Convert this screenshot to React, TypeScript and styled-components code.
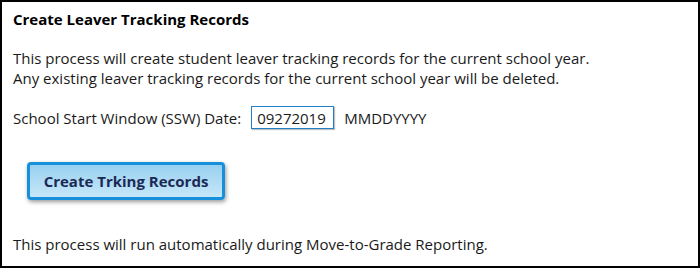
import styled, {createGlobalStyle} from "styled-components";

const GlobalStyle = createGlobalStyle`
  html, body {
    margin: 0;
    padding: 0;
    background: #ffffff;
  }
`;

const Panel = styled.div`
  box-sizing: border-box;
  width: 700px;
  height: 268px;
  border: 2px solid #000;
  padding: 7px 11px;
  font-family: "Open Sans", "Liberation Sans", sans-serif;
  font-size: 15px;
  color: #1a1a1a;
`;

const Title = styled.h1`
  margin: 0;
  font-size: 15px;
  font-weight: 700;
  line-height: 20px;
  color: #000;
`;

const Paragraph = styled.p<{ $top: number }>`
  margin: ${(p) => p.$top}px 0 0;
  line-height: 20px;
`;

const DateRow = styled.div`
  display: flex;
  align-items: center;
  gap: 10px;
  margin-top: 18px;
`;

const DateInput = styled.input`
  box-sizing: border-box;
  width: 83px;
  height: 23px;
  padding: 0 5px;
  border: 1px solid #1e80c8;
  box-shadow: 1px 1px 1px rgba(0, 0, 0, 0.25);
  font-family: inherit;
  font-size: 15px;
  color: #1a1a1a;
  outline: none;
`;

const ButtonWrap = styled.div`
  padding: 33px 0 0 14px;
`;

const ActionButton = styled.button`
  box-sizing: border-box;
  width: 198px;
  height: 38px;
  border: 3px solid #1690da;
  border-radius: 4px;
  background: linear-gradient(to bottom, #98d0f0, #c6e7f8);
  box-shadow: 1px 2px 4px rgba(0, 0, 0, 0.4);
  font-family: "Open Sans", "Liberation Sans", sans-serif;
  font-size: 15px;
  font-weight: 700;
  color: #1b2a55;
  cursor: pointer;
`;

export default function App() {
  return (
    <>
      <GlobalStyle/>
      <Panel>
        <Title>Create Leaver Tracking Records</Title>
        <Paragraph $top={19}>
          This process will create student leaver tracking records for the current school year.
          <br/>
          Any existing leaver tracking records for the current school year will be deleted.
        </Paragraph>
        <DateRow>
          <span>School Start Window (SSW) Date:</span>
          <DateInput defaultValue="09272019"/>
          <span>MMDDYYYY</span>
        </DateRow>
        <ButtonWrap>
          <ActionButton>Create Trking Records</ActionButton>
        </ButtonWrap>
        <Paragraph $top={34}>
          This process will run automatically during Move-to-Grade Reporting.
        </Paragraph>
      </Panel>
    </>
  );
}
